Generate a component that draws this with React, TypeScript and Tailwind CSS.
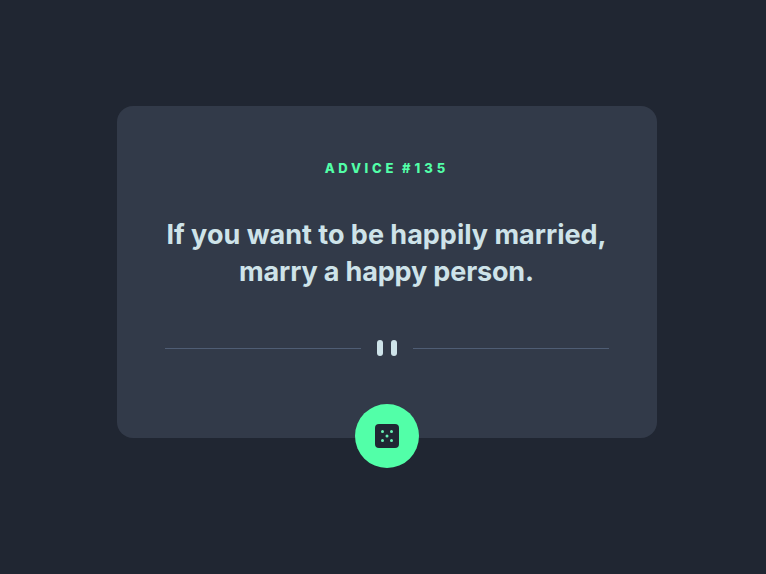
export default function App() {
  return (
    <main className="flex h-[574px] w-full items-start justify-center bg-[#202632] pl-2 pt-[106px] font-['Inter',sans-serif]">
      <section className="flex h-[332px] w-[540px] flex-col items-center rounded-2xl bg-[#323a49] px-12 pt-[52px]">
        <h1 className="h-5 whitespace-nowrap text-[13px] font-extrabold leading-5 tracking-[3.7px] text-[#52ffa8] [word-spacing:-1.5px]">
          ADVICE <span className="tracking-[4px]">#135</span>
        </h1>
        <p className="mt-[38px] flex flex-col items-center whitespace-nowrap pr-px text-[27px] font-bold leading-[37px] text-[#cee3e9]">
          <span>If you want to be happily married,</span>
          <span className="tracking-[-0.15px]">marry a happy person.</span>
        </p>
        <svg className="mt-[50px] h-4 w-[444px] shrink-0" viewBox="0 0 444 16">
          <path fill="#4f5d74" d="M0 8h196v1H0zM248 8h196v1H248z" />
          <rect x="212" width="6" height="16" rx="3" fill="#cee3e9" />
          <rect x="226" width="6" height="16" rx="3" fill="#cee3e9" />
        </svg>
        <button aria-label="New advice" className="mt-12 flex size-16 shrink-0 items-center justify-center rounded-full bg-[#52ffa8]">
          <svg width="24" height="24" viewBox="0 0 24 24">
            <rect width="24" height="24" rx="4" fill="#202733" />
            <g fill="#68f2b5"><circle cx="7.5" cy="7.5" r="1.5" /><circle cx="16.5" cy="7.5" r="1.5" /><circle cx="12" cy="12" r="1.5" /><circle cx="7.5" cy="16.5" r="1.5" /><circle cx="16.5" cy="16.5" r="1.5" /></g>
          </svg>
        </button>
      </section>
    </main>
  );
}
